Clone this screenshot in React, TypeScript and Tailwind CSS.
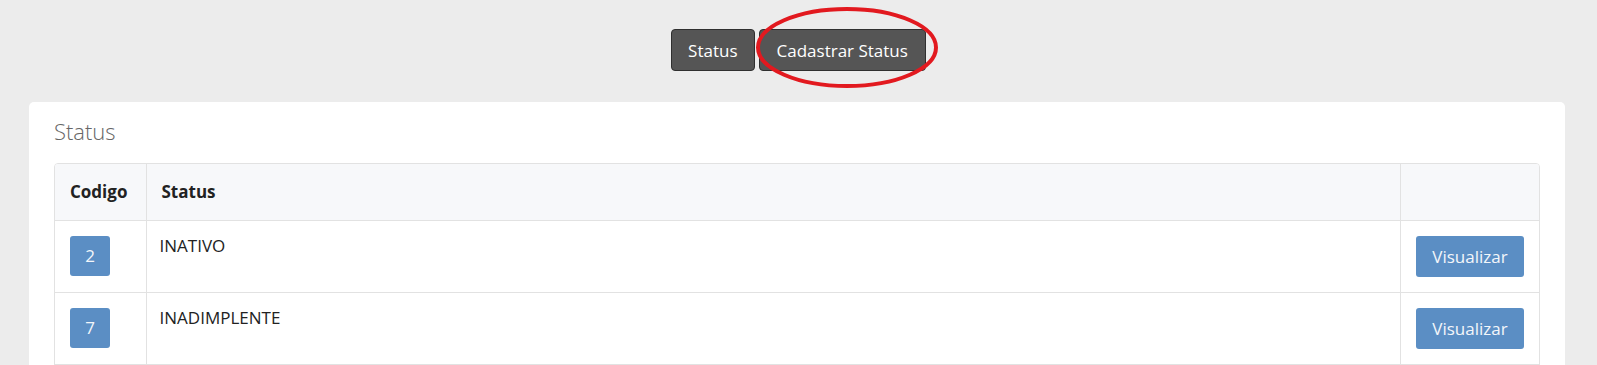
import React from 'react';

const rows = [
  { code: 2, name: 'INATIVO' },
  { code: 7, name: 'INADIMPLENTE' },
];

const App: React.FC = () => {
  return (
    <div
      className="min-h-screen bg-[#ececec] pt-[29px] text-[17px] text-[#222]"
      style={{ fontFamily: '"Open Sans", "Liberation Sans", sans-serif' }}
    >
      {/* Top navigation buttons */}
      <div className="flex justify-center gap-[4px]">
        <button className="h-[42px] rounded-[4px] border border-[#2f2f2f] bg-[#555] px-[16px] leading-none text-white">
          Status
        </button>
        <div className="relative">
          <button className="h-[42px] rounded-[4px] border border-[#2f2f2f] bg-[#555] px-[17px] leading-none text-white">
            Cadastrar Status
          </button>
          {/* Red annotation circle */}
          <svg
            className="pointer-events-none absolute left-[-4px] top-[-23px]"
            width="184"
            height="83"
            viewBox="0 0 184 83"
          >
            <ellipse cx="92" cy="41.5" rx="89" ry="38.5" fill="none" stroke="#e2191f" strokeWidth="4" />
          </svg>
        </div>
      </div>

      {/* Card */}
      <div className="ml-[29px] mr-[32px] mt-[31px] rounded-[5px] bg-white px-[25px] pb-[30px] pt-[17px]">
        <h4 className="text-[22px] font-light leading-[24px] text-[#666]">Status</h4>

        <div className="mt-[20px] overflow-hidden rounded-[4px] border border-[#e2e2e2]">
          <table className="w-full border-collapse">
            <thead>
              <tr className="bg-[#f7f8fa]">
                <th className="w-[91px] px-[15px] py-[15px] text-left font-bold leading-[26px]">Codigo</th>
                <th className="border-l border-[#e2e2e2] px-[15px] py-[15px] text-left font-bold leading-[26px]">
                  Status
                </th>
                <th className="w-[138px] border-l border-[#e2e2e2] px-[15px] py-[15px]"></th>
              </tr>
            </thead>
            <tbody>
              {rows.map((row) => (
                <tr key={row.code}>
                  <td className="border-t border-[#e2e2e2] p-[15px] align-top">
                    <span className="flex h-[40px] w-[40px] items-center justify-center rounded-[3px] bg-[#5b8ec4] text-[#f3f6fa]">
                      {row.code}
                    </span>
                  </td>
                  <td className="border-l border-t border-[#e2e2e2] py-[15px] pl-[13px] pr-[15px] align-top leading-[20px]">
                    {row.name}
                  </td>
                  <td className="border-l border-t border-[#e2e2e2] p-[15px] align-top">
                    <button className="h-[41px] w-[108px] rounded-[3px] bg-[#5b8ec4] leading-none text-[#f3f6fa]">
                      Visualizar
                    </button>
                  </td>
                </tr>
              ))}
              {/* next row continues below the visible area */}
              <tr>
                <td className="h-[70px] border-t border-[#e2e2e2]"></td>
                <td className="border-l border-t border-[#e2e2e2]"></td>
                <td className="border-l border-t border-[#e2e2e2]"></td>
              </tr>
            </tbody>
          </table>
        </div>
      </div>
    </div>
  );
};

export default App;
